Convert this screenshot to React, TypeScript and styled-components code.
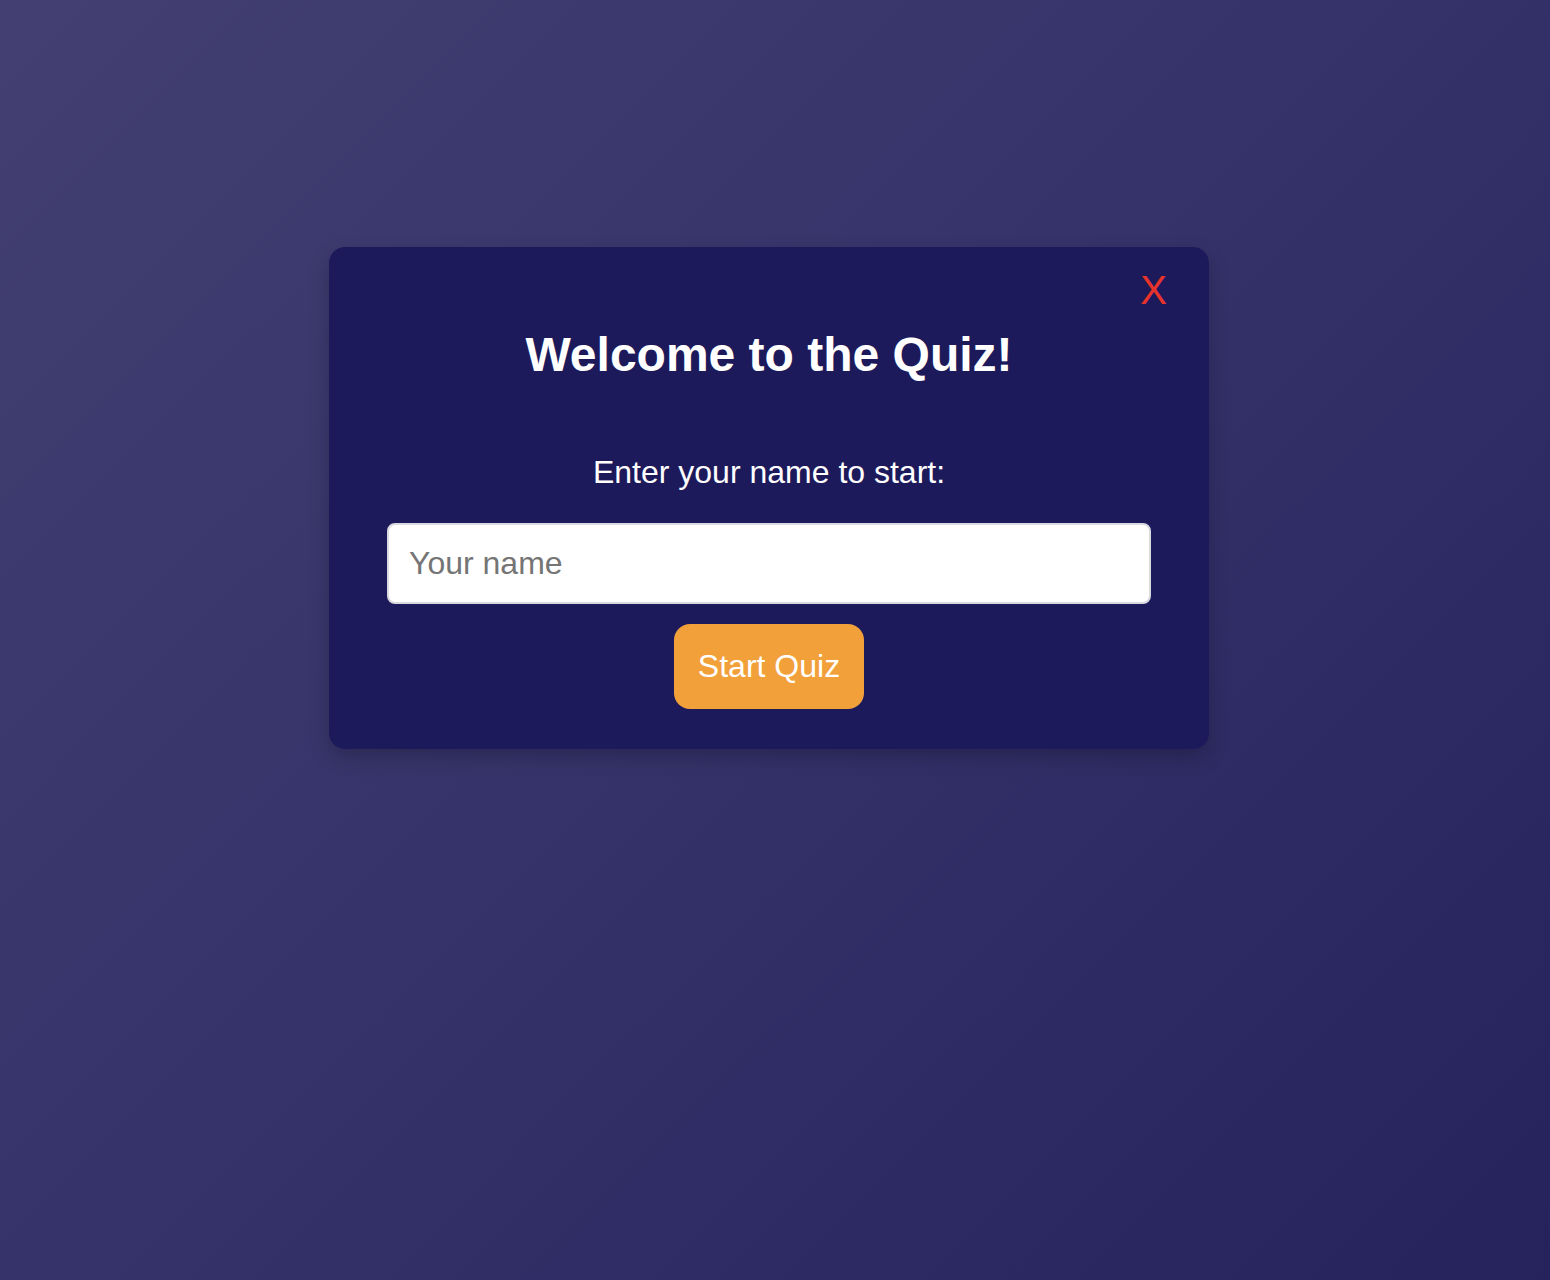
import React from "react";
import styled, { createGlobalStyle } from "styled-components";

const GlobalStyle = createGlobalStyle`
  html, body {
    margin: 0;
    padding: 0;
    min-height: 100%;
  }
  body {
    font-family: "Liberation Sans", Arial, sans-serif;
    background: linear-gradient(135deg, #433f72 0%, #35326a 50%, #25225c 100%);
    min-height: 1280px;
  }
  * { box-sizing: border-box; }
`;

const Page = styled.div`
  min-height: 1280px;
  display: flex;
  justify-content: center;
  align-items: flex-start;
  padding: 247px 12px 0 0;
`;

const Modal = styled.div`
  position: relative;
  width: 880px;
  background: #1d1a5c;
  border-radius: 16px;
  padding: 80px 58px 40px;
  display: flex;
  flex-direction: column;
  align-items: center;
  box-shadow: 0 8px 20px rgba(0, 0, 0, 0.22);
`;

const CloseButton = styled.button`
  position: absolute;
  top: 20px;
  right: 42px;
  background: none;
  border: none;
  padding: 0;
  color: #e8332a;
  font-family: "Liberation Sans", Arial, sans-serif;
  font-size: 40px;
  line-height: 46px;
  cursor: pointer;
`;

const Title = styled.h1`
  margin: 0 0 72px;
  color: #ffffff;
  font-size: 48px;
  font-weight: 700;
  line-height: normal;
  text-align: center;
`;

const Prompt = styled.p`
  margin: 0 0 32px;
  color: #ffffff;
  font-size: 32px;
  line-height: normal;
  text-align: center;
`;

const NameInput = styled.input`
  width: 100%;
  height: 81px;
  padding: 0 20px;
  border: 2px solid #d9d9e0;
  border-radius: 8px;
  background: #ffffff;
  font-family: "Liberation Sans", Arial, sans-serif;
  font-size: 32px;
  color: #222;
  outline: none;
  margin: 0 0 20px;

  &::placeholder {
    color: #757575;
  }
`;

const StartButton = styled.button`
  background: #f1a03a;
  color: #ffffff;
  border: none;
  border-radius: 16px;
  padding: 0 24px;
  height: 85px;
  font-family: "Liberation Sans", Arial, sans-serif;
  font-size: 32px;
  cursor: pointer;
`;

export default function App() {
  return (
    <>
      <GlobalStyle />
      <Page>
        <Modal>
          <CloseButton aria-label="Close">X</CloseButton>
          <Title>Welcome to the Quiz!</Title>
          <Prompt>Enter your name to start:</Prompt>
          <NameInput type="text" placeholder="Your name" />
          <StartButton>Start Quiz</StartButton>
        </Modal>
      </Page>
    </>
  );
}
